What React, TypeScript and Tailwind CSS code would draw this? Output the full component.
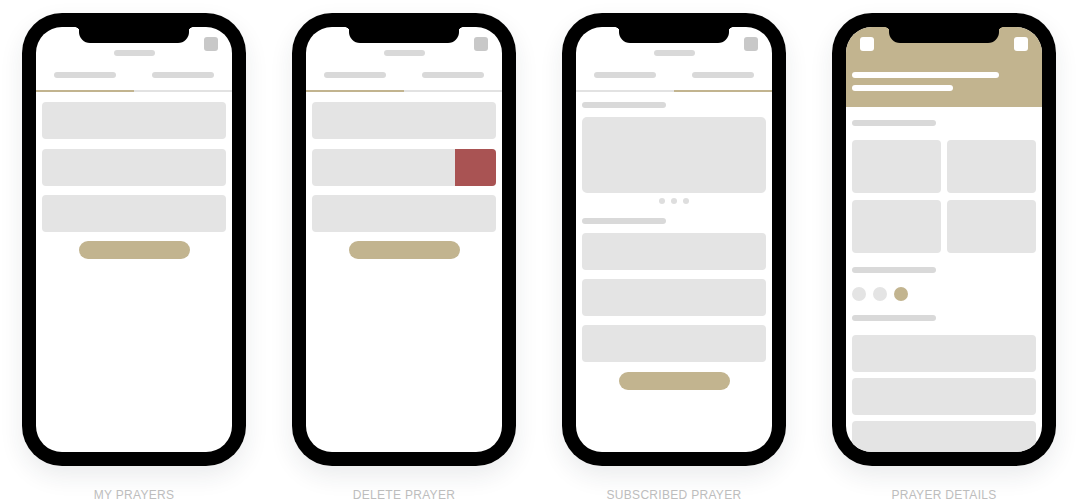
import type { ReactNode } from 'react'

const screens = [
  { label: 'MY PRAYERS', view: 'list' },
  { label: 'DELETE PRAYER', view: 'delete' },
  { label: 'SUBSCRIBED PRAYER', view: 'subscribed' },
  { label: 'PRAYER DETAILS', view: 'details' },
] as const

type View = (typeof screens)[number]['view']

function Pill({ className = '' }: { className?: string }) {
  return <div className={`h-[6px] rounded-full bg-[#d9d9d9] ${className}`} />
}

function Card({ children, className = '' }: { children?: ReactNode; className?: string }) {
  return <div className={`h-[37px] rounded-[4px] bg-[#e4e4e4] flex justify-end ${className}`}>{children}</div>
}

function PrimaryButton() {
  return <div className="mx-auto h-[18px] w-[111px] rounded-full bg-[#c2b48f]" />
}

function TabHeader({ active }: { active: 'left' | 'right' }) {
  return (
    <div className="relative">
      <div className="absolute right-[14px] top-[10px] h-[14px] w-[14px] rounded-[3px] bg-[#c8c8c8]" />
      <div className="flex justify-center pt-[23px]">
        <Pill className="w-[41px]" />
      </div>
      <div className="mt-[16px] grid grid-cols-2">
        <div className="flex justify-center">
          <Pill className="w-[62px]" />
        </div>
        <div className="flex justify-center">
          <Pill className="w-[62px]" />
        </div>
      </div>
      <div className="mt-[12px] grid h-[2px] grid-cols-2">
        <div className={active === 'left' ? 'bg-[#c2b48f]' : 'bg-[#e2e2e2]'} />
        <div className={active === 'right' ? 'bg-[#c2b48f]' : 'bg-[#e2e2e2]'} />
      </div>
    </div>
  )
}

function PrayerList({ swiped }: { swiped?: boolean }) {
  return (
    <>
      <TabHeader active="left" />
      <div className="mt-[10px] flex flex-col gap-[9.5px] px-[6px]">
        <Card />
        <Card>{swiped && <div className="h-full w-[41px] rounded-r-[4px] bg-[#a95353]" />}</Card>
        <Card />
      </div>
      <div className="mt-[9px]">
        <PrimaryButton />
      </div>
    </>
  )
}

function Subscribed() {
  return (
    <>
      <TabHeader active="right" />
      <div className="flex flex-col px-[6px]">
        <Pill className="mt-[10px] w-[84px]" />
        <div className="mt-[9px] h-[76px] rounded-[5px] bg-[#e4e4e4]" />
        <div className="mt-[5px] flex justify-center gap-[6px]">
          <span className="h-[6px] w-[6px] rounded-full bg-[#dedede]" />
          <span className="h-[6px] w-[6px] rounded-full bg-[#dedede]" />
          <span className="h-[6px] w-[6px] rounded-full bg-[#dedede]" />
        </div>
        <Pill className="mt-[14px] w-[84px]" />
        <div className="mt-[9px] flex flex-col gap-[9px]">
          <Card />
          <Card />
          <Card />
        </div>
      </div>
      <div className="mt-[10px]">
        <PrimaryButton />
      </div>
    </>
  )
}

function Details() {
  return (
    <>
      <div className="relative h-[80px] bg-[#c2b48f] px-[6px] pt-[45px]">
        <div className="absolute left-[14px] top-[10px] h-[14px] w-[14px] rounded-[3px] bg-white" />
        <div className="absolute right-[14px] top-[10px] h-[14px] w-[14px] rounded-[3px] bg-white" />
        <div className="h-[6px] w-[147px] rounded-full bg-white" />
        <div className="mt-[7px] h-[6px] w-[101px] rounded-full bg-white" />
      </div>
      <div className="flex flex-col px-[6px]">
        <Pill className="mt-[13px] w-[84px]" />
        <div className="mt-[14px] grid grid-cols-2 gap-[6px] gap-y-[7px]">
          <div className="h-[53px] rounded-[4px] bg-[#e4e4e4]" />
          <div className="h-[53px] rounded-[4px] bg-[#e4e4e4]" />
          <div className="h-[53px] rounded-[4px] bg-[#e4e4e4]" />
          <div className="h-[53px] rounded-[4px] bg-[#e4e4e4]" />
        </div>
        <Pill className="mt-[14px] w-[84px]" />
        <div className="mt-[14px] flex gap-[7px]">
          <span className="h-[14px] w-[14px] rounded-full bg-[#e4e4e4]" />
          <span className="h-[14px] w-[14px] rounded-full bg-[#e4e4e4]" />
          <span className="h-[14px] w-[14px] rounded-full bg-[#c2b48f]" />
        </div>
        <Pill className="mt-[14px] w-[84px]" />
        <div className="mt-[14px] flex flex-col gap-[6px]">
          <Card />
          <Card />
          <Card />
        </div>
      </div>
    </>
  )
}

// notch with small flared shoulders where it meets the bezel
function Notch() {
  return (
    <div className="absolute left-[39px] top-0 flex">
      <span className="h-[5px] w-[5px] -mr-px bg-[radial-gradient(circle_at_0_100%,transparent_4.5px,#000_5px)]" />
      <div className="h-[16px] w-[110px] rounded-b-[11px] bg-black" />
      <span className="h-[5px] w-[5px] -ml-px bg-[radial-gradient(circle_at_100%_100%,transparent_4.5px,#000_5px)]" />
    </div>
  )
}

function Phone({ view }: { view: View }) {
  return (
    <div className="h-[453px] w-[224px] rounded-[40px] bg-black p-[14px] shadow-[0_10px_24px_rgba(30,40,60,0.09)]">
      <div className="relative h-full overflow-hidden rounded-[26px] bg-white">
        {view === 'list' && <PrayerList />}
        {view === 'delete' && <PrayerList swiped />}
        {view === 'subscribed' && <Subscribed />}
        {view === 'details' && <Details />}
        <Notch />
      </div>
    </div>
  )
}

export default function App() {
  return (
    <div className="h-[503px] w-[1080px] overflow-hidden bg-white font-['Liberation_Sans',Arial,sans-serif]">
      <div className="flex gap-[46px] pl-[22px] pt-[13px]">
        {screens.map((s) => (
          <div key={s.label} className="flex flex-col items-center">
            <Phone view={s.view} />
            <div className="mt-[22px] text-[12px] leading-[14px] tracking-[0.3px] text-[#bdbdbd]">{s.label}</div>
          </div>
        ))}
      </div>
    </div>
  )
}
